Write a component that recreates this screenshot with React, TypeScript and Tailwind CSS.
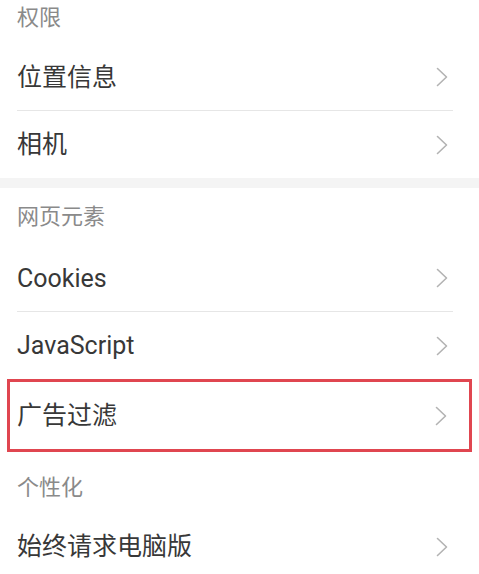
const font = { fontFamily: 'Roboto, "Noto Sans CJK SC", sans-serif' };

function Chevron() {
  return (
    <svg width="12" height="20" viewBox="0 0 12 20" className="shrink-0">
      <path d="M1.5 1.5 L10.5 10 L1.5 18.5" fill="none" stroke="#b3b3b3" strokeWidth="1.6" strokeLinecap="round" strokeLinejoin="round" />
    </svg>
  );
}

function Header({ title, className }: { title: string; className: string }) {
  return (
    <div className={`flex px-[17px] text-[22px] leading-none text-[#8a8a8a] ${className}`}>{title}</div>
  );
}

function Row({ label, divider }: { label: string; divider?: boolean }) {
  return (
    <div className="pl-[17px] pr-[26px]">
      <div className={`flex h-[67px] items-center justify-between pr-[5px] ${divider ? "border-b border-[#e6e6e6]" : ""}`}>
        <span className="text-[25px] leading-none text-[#383838]">{label}</span>
        <Chevron />
      </div>
    </div>
  );
}

export default function App() {
  return (
    <div className="h-[574px] w-[479px] overflow-hidden bg-white" style={font}>
      <Header title="权限" className="h-[44px] items-start pt-[7px]" />
      <Row label="位置信息" divider />
      <Row label="相机" />
      <div className="h-[10px] bg-[#f4f4f4]" />
      <Header title="网页元素" className="h-[57px] items-center" />
      <Row label="Cookies" divider />
      <Row label="JavaScript" />
      <div className="mx-[7px] flex h-[73px] items-center justify-between border-[3px] border-[#e04650] pl-[7px] pr-[22px]">
        <span className="text-[25px] leading-none text-[#383838]">广告过滤</span>
        <Chevron />
      </div>
      <Header title="个性化" className="h-[61px] items-center pt-[10px]" />
      <Row label="始终请求电脑版" />
    </div>
  );
}
